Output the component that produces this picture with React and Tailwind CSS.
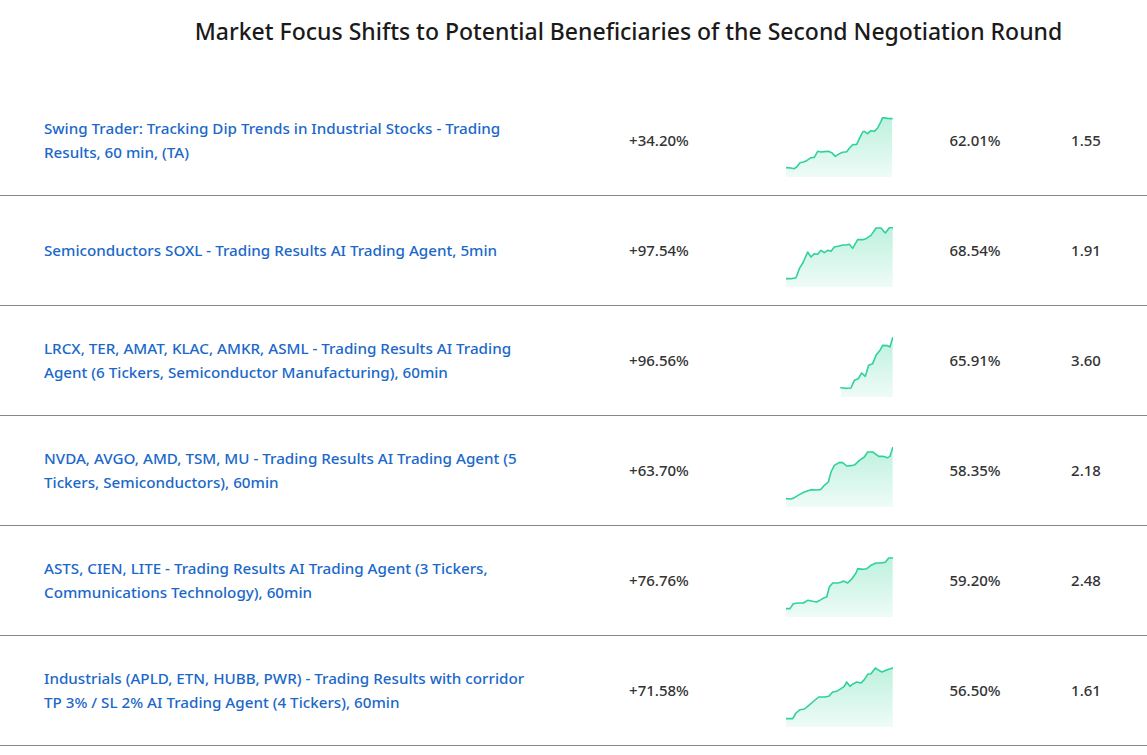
import React from 'react';

const rows = [
  {
    title: 'Swing Trader: Tracking Dip Trends in Industrial Stocks - Trading Results, 60 min, (TA)',
    ret: '+34.20%',
    win: '62.01%',
    pf: '1.55',
    pts: [[0,152],[15,153],[25,155],[32,150],[42,137],[52,135],[62,131],[75,122],[85,121],[95,103],[105,105],[115,104],[127,103],[137,107],[148,118],[160,110],[170,106],[182,104],[190,94],[200,83],[212,82],[220,65],[230,45],[235,43],[245,50],[255,41],[265,43],[275,33],[285,13],[290,2],[305,4],[318,5]],
  },
  {
    title: 'Semiconductors SOXL - Trading Results AI Trading Agent, 5min',
    ret: '+97.54%',
    win: '68.54%',
    pf: '1.91',
    pts: [[0,155],[15,155],[30,152],[40,125],[52,105],[65,75],[75,90],[85,80],[95,82],[105,70],[115,77],[125,70],[135,73],[145,60],[160,57],[170,54],[180,54],[190,52],[200,64],[215,38],[230,38],[240,35],[255,25],[270,3],[285,3],[298,18],[310,2],[320,2]],
  },
  {
    title: 'LRCX, TER, AMAT, KLAC, AMKR, ASML - Trading Results AI Trading Agent (6 Tickers, Semiconductor Manufacturing), 60min',
    ret: '+96.56%',
    win: '65.91%',
    pf: '3.60',
    pts: [[165,152],[178,154],[195,153],[205,130],[217,125],[227,108],[238,118],[248,85],[260,80],[270,55],[282,40],[290,25],[305,26],[312,30],[320,2]],
  },
  {
    title: 'NVDA, AVGO, AMD, TSM, MU - Trading Results AI Trading Agent (5 Tickers, Semiconductors), 60min',
    ret: '+63.70%',
    win: '58.35%',
    pf: '2.18',
    pts: [[0,155],[15,156],[25,152],[40,143],[55,135],[75,128],[90,129],[105,127],[115,115],[127,105],[135,75],[145,55],[160,46],[170,47],[182,57],[195,56],[207,53],[220,40],[235,30],[245,15],[260,15],[270,22],[278,28],[290,28],[305,32],[312,28],[320,2]],
  },
  {
    title: 'ASTS, CIEN, LITE - Trading Results AI Trading Agent (3 Tickers, Communications Technology), 60min',
    ret: '+76.76%',
    win: '59.20%',
    pf: '2.48',
    pts: [[0,155],[12,155],[22,140],[35,138],[52,138],[65,130],[80,133],[92,135],[105,128],[115,122],[122,120],[130,90],[140,78],[155,78],[165,76],[172,72],[185,78],[198,65],[210,48],[215,35],[230,37],[242,35],[255,25],[270,18],[285,18],[298,16],[308,3],[320,3]],
  },
  {
    title: 'Industrials (APLD, ETN, HUBB, PWR) - Trading Results with corridor TP 3% / SL 2% AI Trading Agent (4 Tickers), 60min',
    ret: '+71.58%',
    win: '56.50%',
    pf: '1.61',
    pts: [[0,155],[20,155],[30,138],[42,128],[55,126],[65,118],[80,105],[98,90],[115,90],[128,88],[140,75],[152,73],[165,65],[175,58],[182,45],[192,58],[202,50],[212,45],[225,48],[235,38],[245,22],[255,20],[268,3],[278,10],[288,15],[300,10],[320,3]],
  },
];

const Sparkline = ({ pts, id }) => {
  const line = pts.map(([x, y], i) => `${i ? 'L' : 'M'}${x} ${y}`).join(' ');
  const area = `${line} L${pts[pts.length - 1][0]} 180 L${pts[0][0]} 180 Z`;
  return (
    <svg width="107" height="60" viewBox="0 0 321 180" className="block">
      <defs>
        <linearGradient id={id} x1="0" y1="0" x2="0" y2="1">
          <stop offset="0%" stopColor="#34d399" stopOpacity="0.32" />
          <stop offset="100%" stopColor="#34d399" stopOpacity="0.08" />
        </linearGradient>
      </defs>
      <path d={area} fill={`url(#${id})`} />
      <path d={line} fill="none" stroke="#2fd29a" strokeWidth="4.8" strokeLinejoin="round" strokeLinecap="round" />
    </svg>
  );
};

export default function App() {
  return (
    <div className="w-[1147px] bg-white font-['Noto_Sans',sans-serif] text-[#333]">
      <div className="h-[86px] pl-[110px] pt-[15px] text-center">
        <h1 className="text-[23px] font-medium leading-[32px] text-[#1a1a1a]">
          Market Focus Shifts to Potential Beneficiaries of the Second Negotiation Round
        </h1>
      </div>
      <div>
        {rows.map((r, i) => (
          <div key={i} className="flex h-[110px] items-center border-b border-[#888] pl-[44px]">
            <div className="w-[500px]">
              <div className="-mt-[2px] max-w-[490px]">
                <a href="#" className="text-[15.2px] font-medium leading-[24px] text-[#1a68c9]">
                  {r.title}
                </a>
              </div>
            </div>
            <div className="w-[230px] text-center text-[15px] font-medium">{r.ret}</div>
            <div className="mt-[13px] w-[132px] pl-[12px]">
              <Sparkline pts={r.pts} id={`g${i}`} />
            </div>
            <div className="w-[138px] text-center text-[15px] font-medium">{r.win}</div>
            <div className="w-[84px] text-center text-[15px] font-medium">{r.pf}</div>
          </div>
        ))}
      </div>
    </div>
  );
}
